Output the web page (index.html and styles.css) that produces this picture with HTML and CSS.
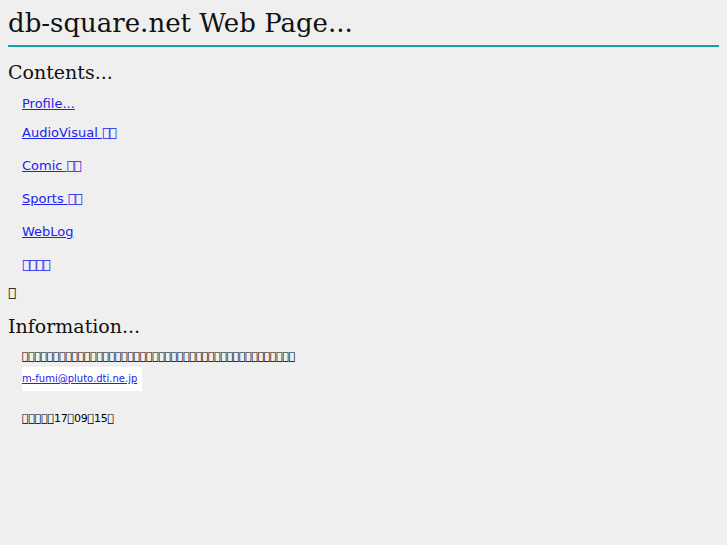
FILE: index.html
```html
<!DOCTYPE html>
<html>
<head>
<meta charset="utf-8">
<title>db-square.net Web Page...</title>
<link rel="stylesheet" href="styles.css">
</head>
<body>
<div class="page">
  <h1 class="title">db-square.net Web Page...</h1>
  <h2 class="section contents-head">Contents...</h2>
  <ul class="menu">
    <li class="first"><a href="#">Profile...</a></li>
    <li class="second"><a href="#">AudioVisual <span class="jp">&#xE000;&#xE000;</span></a></li>
    <li><a href="#">Comic <span class="jp">&#xE000;&#xE000;</span></a></li>
    <li><a href="#">Sports <span class="jp">&#xE000;&#xE000;</span></a></li>
    <li><a href="#">WebLog</a></li>
    <li><a href="#"><span class="jp">&#xE000;&#xE000;&#xE000;&#xE000;</span></a></li>
  </ul>
  <p class="lone">&#xE000;</p>
  <h2 class="section info-head">Information...</h2>
  <div class="info">
    <p class="note">&#xE000;&#xE000;&#xE000;&#xE000;&#xE000;&#xE000;&#xE000;&#xE000;&#xE000;&#xE000;&#xE000;&#xE000;&#xE000;&#xE000;&#xE000;&#xE000;&#xE000;&#xE000;&#xE000;&#xE000;&#xE000;&#xE000;&#xE000;&#xE000;&#xE000;&#xE000;&#xE000;&#xE000;&#xE000;&#xE000;&#xE000;&#xE000;&#xE000;&#xE000;&#xE000;&#xE000;&#xE000;&#xE000;&#xE000;&#xE000;&#xE000;&#xE000;&#xE000;&#xE000;</p>
    <div class="mailbox"><a href="#">m-fumi@pluto.dti.ne.jp</a></div>
    <p class="updated">&#xE000;&#xE000;&#xE000;&#xE000;&#xE000;17&#xE000;09&#xE000;15&#xE000;</p>
  </div>
</div>
</body>
</html>
```
FILE: styles.css
```css
html, body {
  margin: 0;
  padding: 0;
  background: #efefef;
}
.page {
  padding: 8px 8px 0 8px;
  color: #000;
  font-family: "DejaVu Sans", sans-serif;
}
.title {
  margin: 0;
  font-family: "DejaVu Serif", serif;
  font-weight: normal;
  font-size: 26px;
  line-height: 30px;
  padding: 0 0 7px 0;
  border-bottom: 2px solid #1a9e9e;
  color: #111;
}
.section {
  margin: 0;
  font-family: "DejaVu Serif", serif;
  font-weight: normal;
  font-size: 19px;
  line-height: 24px;
  color: #111;
}
.contents-head { margin-top: 13px; }
.menu {
  list-style: none;
  margin: 10px 0 0 0;
  padding: 0 0 0 14px;
  font-size: 13px;
  line-height: 20px;
}
.menu li { margin-top: 13px; }
.menu li.first { margin-top: 0; }
.menu li.second { margin-top: 9px; }
.menu a { color: #2222ee; }
.jp { letter-spacing: -1px; }
.lone {
  margin: 8px 0 0 0;
  font-size: 13px;
  line-height: 20px;
}
.info-head { margin-top: 11px; }
.info {
  padding-left: 14px;
  font-size: 11px;
  line-height: 16px;
}
.note { margin: 11px 0 0 0; letter-spacing: -0.4px; }
.mailbox {
  display: inline-block;
  background: #ffffff;
  height: 24px;
  line-height: 24px;
  padding: 0 5px 0 0;
  margin-top: 2px;
  font-size: 10px;
}
.mailbox a { color: #2222ee; }
.updated { margin: 20px 0 0 0; letter-spacing: -0.2px; }
```
